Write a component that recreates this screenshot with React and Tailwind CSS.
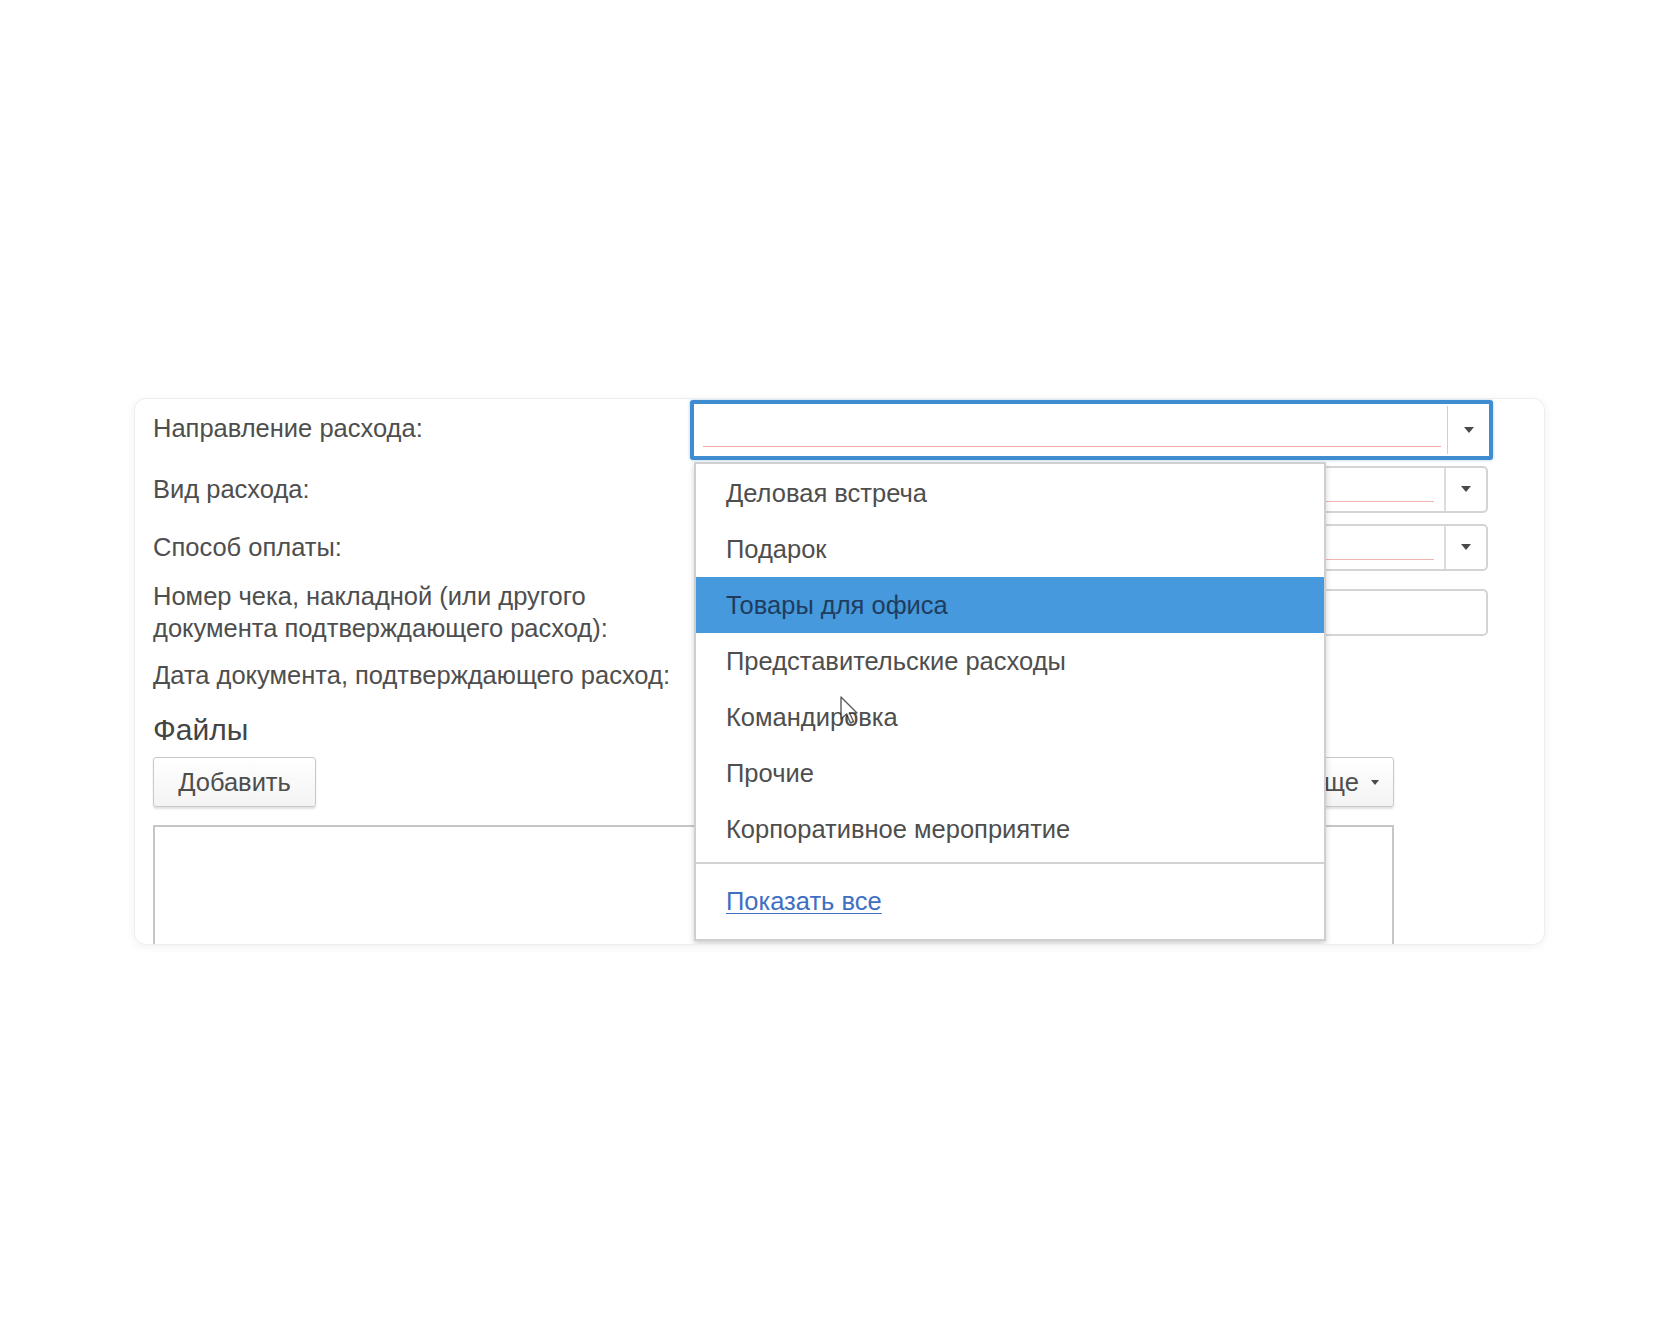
import { useState } from 'react'

const items = [
  'Деловая встреча',
  'Подарок',
  'Товары для офиса',
  'Представительские расходы',
  'Командировка',
  'Прочие',
  'Корпоративное мероприятие',
]

function Arrow() {
  return (
    <svg width="10" height="6" viewBox="0 0 10 6" className="block">
      <path d="M0 0 L10 0 L5 6 Z" fill="#4a4a4a" />
    </svg>
  )
}

function SelectField({ focused }) {
  if (focused) {
    return (
      <div className="flex h-[60px] w-[803px] items-stretch rounded-[3px] border-[4px] border-[#3f8dd0] bg-white shadow-[0_0_3px_rgba(63,141,208,0.5)]">
        <div className="flex flex-1 flex-col justify-end pb-[9px] pl-[9px] pr-[6px]">
          <div className="h-px bg-[#f2a9a9]" />
        </div>
        <div className="my-[2px] w-px bg-[#cfcfcf]" />
        <div className="flex w-[41px] items-center justify-center">
          <Arrow />
        </div>
      </div>
    )
  }
  return (
    <div className="ml-[4px] flex h-[47px] w-[794px] items-stretch rounded-[5px] border-2 border-[#d4d4d4] bg-white">
      <div className="flex flex-1 flex-col justify-end pb-[9px] pl-[9px] pr-[10px]">
        <div className="h-px bg-[#f2b3b3]" />
      </div>
      <div className="w-[2px] bg-[#dcdcdc]" />
      <div className="flex w-[40px] items-center justify-center">
        <Arrow />
      </div>
    </div>
  )
}

function Cursor() {
  return (
    <svg width="20" height="30" viewBox="0 0 20 30" className="absolute left-[705px] top-[297px] opacity-80">
      <path d="M1 1 L1 23 L6.5 18 L10.5 27 L13.5 25.5 L9.5 17 L17 17 Z" fill="#ffffff" stroke="#333333" strokeWidth="1.4" strokeLinejoin="round" />
    </svg>
  )
}

export default function App() {
  const [active] = useState(2)

  return (
    <div className="min-h-[1344px] bg-white pl-[134px] pt-[398px] font-['Liberation_Sans',Arial,sans-serif] text-[25.5px] text-[#4e4e4e]">
      <div className="relative h-[547px] w-[1411px] overflow-hidden rounded-[12px] border border-[#eeeeee] bg-white pl-[18px] shadow-[0_2px_10px_rgba(0,0,0,0.06)]">
        <div className="grid grid-cols-[537px_1fr]">
          <div className="flex h-[62px] items-center pb-[4px]">Направление расхода:</div>
          <div className="flex h-[62px] items-center">
            <SelectField focused />
          </div>

          <div className="flex h-[56px] items-center">Вид расхода:</div>
          <div className="flex h-[56px] items-center">
            <SelectField />
          </div>

          <div className="flex h-[60px] items-center">Способ оплаты:</div>
          <div className="flex h-[60px] items-center">
            <SelectField />
          </div>

          <div className="flex h-[70px] items-center leading-[32px]">
            Номер чека, накладной (или другого
            <br />
            документа подтверждающего расход):
          </div>
          <div className="flex h-[70px] items-center">
            <div className="ml-[4px] h-[47px] w-[794px] rounded-[5px] border-2 border-[#d4d4d4] bg-white" />
          </div>

          <div className="flex h-[56px] items-center">Дата документа, подтверждающего расход:</div>
          <div className="flex h-[56px] items-center">
            <div className="ml-[4px] h-[47px] w-[400px] rounded-[5px] border-2 border-[#d4d4d4] bg-white" />
          </div>
        </div>

        <div className="flex h-[52px] items-center text-[30px] text-[#444]">Файлы</div>

        <div className="w-[1241px]">
          <div className="mt-[2px] flex h-[50px] items-stretch justify-between">
            <button className="w-[163px] rounded-[3px] border border-[#c9c9c9] bg-gradient-to-b from-white to-[#f3f3f3] text-[#4e4e4e] shadow-[0_2px_2px_rgba(0,0,0,0.12)]">
              Добавить
            </button>
            <button className="flex items-center gap-[12px] rounded-[3px] border border-[#c9c9c9] bg-gradient-to-b from-white to-[#f3f3f3] pl-[24px] pr-[14px] text-[#4e4e4e] shadow-[0_2px_2px_rgba(0,0,0,0.12)]">
              Еще
              <svg width="8" height="5" viewBox="0 0 8 5">
                <path d="M0 0 L8 0 L4 5 Z" fill="#4a4a4a" />
              </svg>
            </button>
          </div>
          <div className="mt-[18px] h-[160px] border-2 border-[#c6c6c6] bg-white" />
        </div>

        <div className="absolute left-[559px] top-[63px] w-[632px] border-2 border-[#cfcfcf] bg-white pt-[1px] shadow-[0_3px_6px_rgba(0,0,0,0.18)]">
          {items.map((item, i) => (
            <div
              key={item}
              className={`flex h-[56px] items-center pl-[30px] ${i === active ? 'bg-[#4599dc] text-[#1f3c5e]' : ''}`}
            >
              {item}
            </div>
          ))}
          <div className="mt-[5px] border-t-2 border-[#d2d2d2]" />
          <div className="flex h-[75px] items-center pl-[30px]">
            <span className="text-[#3f6fc2] underline decoration-1 underline-offset-[3px]">Показать все</span>
          </div>
        </div>

        <Cursor />
      </div>
    </div>
  )
}
